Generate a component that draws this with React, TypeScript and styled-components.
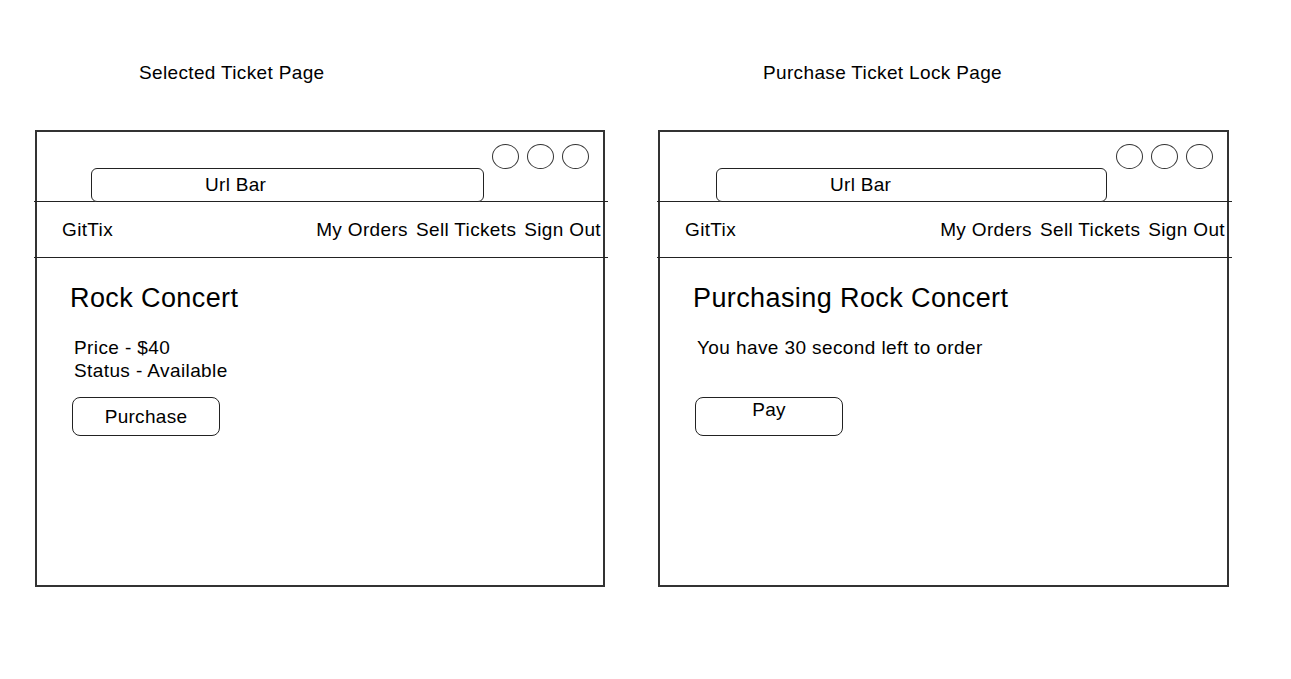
import React from 'react';
import styled, { createGlobalStyle } from 'styled-components';

const GlobalStyle = createGlobalStyle`
	body {
		margin: 0;
		background: #fff;
		color: #000;
		font-family: 'Liberation Sans', Arial, sans-serif;
	}
`;

const Page = styled.div`
	display: flex;
	gap: 53px;
	padding: 62px 0 0 35px;
`;

const Column = styled.div`
	display: flex;
	flex-direction: column;
`;

const Caption = styled.div<{ $indent: number }>`
	padding-left: ${(p) => p.$indent}px;
	font-size: 19px;
	line-height: 22px;
	letter-spacing: 0.35px;
	margin-bottom: 46px;
`;

const Window = styled.div<{ $width: number }>`
	width: ${(p) => p.$width}px;
	height: 457px;
	box-sizing: border-box;
	border: 2px solid #333;
	display: flex;
	flex-direction: column;
`;

const TopBar = styled.div<{ $urlIndent: number }>`
	height: 69px;
	display: flex;
	padding: 12px 14px 0 ${(p) => p.$urlIndent}px;
	box-sizing: border-box;
`;

const UrlBar = styled.div<{ $width: number }>`
	align-self: flex-end;
	width: ${(p) => p.$width}px;
	height: 34px;
	margin-bottom: -1px;
	box-sizing: border-box;
	border: 1.5px solid #222;
	border-radius: 6px;
	display: flex;
	align-items: center;
	padding-left: 113px;
	font-size: 19px;
	letter-spacing: 0.3px;
	position: relative;
	z-index: 1;
	background: #fff;
`;

const Dots = styled.div`
	margin-left: auto;
	display: flex;
	gap: 8px;
`;

const Dot = styled.div`
	width: 27px;
	height: 25px;
	box-sizing: border-box;
	border: 1.5px solid #333;
	border-radius: 50%;
`;

const Divider = styled.div`
	height: 1px;
	background: #222;
	margin: 0 -5px 0 -3px;
`;

const NavBar = styled.div`
	height: 55px;
	display: flex;
	align-items: center;
	padding: 0 2px 0 25px;
	font-size: 19px;
	letter-spacing: 0.35px;
`;

const Brand = styled.div`
	margin-right: auto;
`;

const NavLinks = styled.div`
	display: flex;
	gap: 8px;
`;

const Content = styled.div`
	padding: 25px 0 0 33px;
`;

const Heading = styled.div`
	font-size: 27px;
	line-height: 30px;
	letter-spacing: 0.4px;
	margin-bottom: 23px;
`;

const Details = styled.div`
	min-height: 46px;
	padding-left: 4px;
	margin-bottom: 15px;
	font-size: 19px;
	line-height: 23px;
	letter-spacing: 0.4px;
`;

const ActionButton = styled.div<{ $lift: number }>`
	width: 148px;
	height: 39px;
	box-sizing: border-box;
	margin-left: 2px;
	border: 1.5px solid #222;
	border-radius: 8px;
	display: flex;
	align-items: center;
	justify-content: center;
	padding-bottom: ${(p) => p.$lift}px;
	font-size: 19px;
	letter-spacing: 0.3px;
`;

interface BrowserProps {
	width: number;
	urlIndent: number;
	urlWidth: number;
	children: React.ReactNode;
}

const Browser = ({ width, urlIndent, urlWidth, children }: BrowserProps) => {
	return (
		<Window $width={width}>
			<TopBar $urlIndent={urlIndent}>
				<UrlBar $width={urlWidth}>Url Bar</UrlBar>
				<Dots>
					<Dot />
					<Dot />
					<Dot />
				</Dots>
			</TopBar>
			<Divider />
			<NavBar>
				<Brand>GitTix</Brand>
				<NavLinks>
					<span>My Orders</span>
					<span>Sell Tickets</span>
					<span>Sign Out</span>
				</NavLinks>
			</NavBar>
			<Divider />
			<Content>{children}</Content>
		</Window>
	);
};

const App = () => {
	return (
		<>
			<GlobalStyle />
			<Page>
				<Column>
					<Caption $indent={104}>Selected Ticket Page</Caption>
					<Browser width={570} urlIndent={54} urlWidth={393}>
						<Heading>Rock Concert</Heading>
						<Details>
							<div>Price - $40</div>
							<div>Status - Available</div>
						</Details>
						<ActionButton $lift={0}>Purchase</ActionButton>
					</Browser>
				</Column>
				<Column>
					<Caption $indent={105}>Purchase Ticket Lock Page</Caption>
					<Browser width={571} urlIndent={56} urlWidth={391}>
						<Heading>Purchasing Rock Concert</Heading>
						<Details>
							<div>You have 30 second left to order</div>
						</Details>
						<ActionButton $lift={14}>Pay</ActionButton>
					</Browser>
				</Column>
			</Page>
		</>
	);
};

export default App;
